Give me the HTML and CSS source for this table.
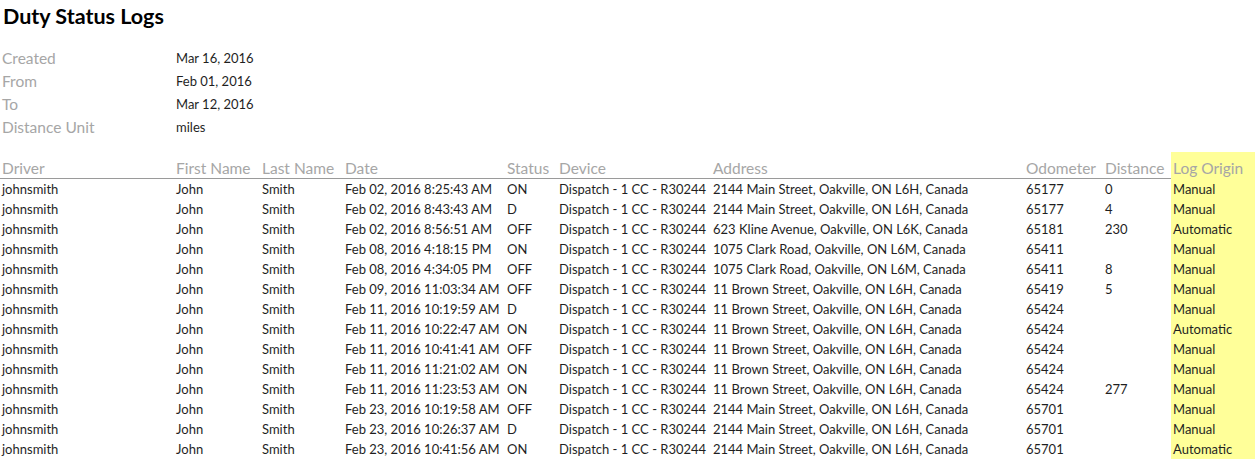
FILE: index.html
```html
<!DOCTYPE html>
<html>
<head>
<meta charset="utf-8">
<link rel="stylesheet" href="styles.css">
</head>
<body>
<div class="page">
  <h1 class="title">Duty Status Logs</h1>
  <div class="meta">
    <div class="meta-row"><span class="meta-label">Created</span><span class="meta-value">Mar 16, 2016</span></div>
    <div class="meta-row"><span class="meta-label">From</span><span class="meta-value">Feb 01, 2016</span></div>
    <div class="meta-row"><span class="meta-label">To</span><span class="meta-value">Mar 12, 2016</span></div>
    <div class="meta-row"><span class="meta-label">Distance Unit</span><span class="meta-value">miles</span></div>
  </div>
  <table class="logs">
    <colgroup>
      <col class="c-driver"><col class="c-first"><col class="c-last"><col class="c-date"><col class="c-status"><col class="c-device"><col class="c-address"><col class="c-odo"><col class="c-dist"><col class="c-origin">
    </colgroup>
    <thead>
      <tr>
        <th>Driver</th><th>First Name</th><th>Last Name</th><th>Date</th><th>Status</th><th>Device</th><th>Address</th><th>Odometer</th><th>Distance</th><th class="origin">Log Origin</th>
      </tr>
    </thead>
    <tbody>
      <tr><td>johnsmith</td><td>John</td><td>Smith</td><td>Feb 02, 2016 8:25:43 AM</td><td>ON</td><td>Dispatch - 1 CC - R30244</td><td>2144 Main Street, Oakville, ON L6H, Canada</td><td>65177</td><td>0</td><td class="origin">Manual</td></tr>
      <tr><td>johnsmith</td><td>John</td><td>Smith</td><td>Feb 02, 2016 8:43:43 AM</td><td>D</td><td>Dispatch - 1 CC - R30244</td><td>2144 Main Street, Oakville, ON L6H, Canada</td><td>65177</td><td>4</td><td class="origin">Manual</td></tr>
      <tr><td>johnsmith</td><td>John</td><td>Smith</td><td>Feb 02, 2016 8:56:51 AM</td><td>OFF</td><td>Dispatch - 1 CC - R30244</td><td>623 Kline Avenue, Oakville, ON L6K, Canada</td><td>65181</td><td>230</td><td class="origin">Automatic</td></tr>
      <tr><td>johnsmith</td><td>John</td><td>Smith</td><td>Feb 08, 2016 4:18:15 PM</td><td>ON</td><td>Dispatch - 1 CC - R30244</td><td>1075 Clark Road, Oakville, ON L6M, Canada</td><td>65411</td><td></td><td class="origin">Manual</td></tr>
      <tr><td>johnsmith</td><td>John</td><td>Smith</td><td>Feb 08, 2016 4:34:05 PM</td><td>OFF</td><td>Dispatch - 1 CC - R30244</td><td>1075 Clark Road, Oakville, ON L6M, Canada</td><td>65411</td><td>8</td><td class="origin">Manual</td></tr>
      <tr><td>johnsmith</td><td>John</td><td>Smith</td><td>Feb 09, 2016 11:03:34 AM</td><td>OFF</td><td>Dispatch - 1 CC - R30244</td><td>11 Brown Street, Oakville, ON L6H, Canada</td><td>65419</td><td>5</td><td class="origin">Manual</td></tr>
      <tr><td>johnsmith</td><td>John</td><td>Smith</td><td>Feb 11, 2016 10:19:59 AM</td><td>D</td><td>Dispatch - 1 CC - R30244</td><td>11 Brown Street, Oakville, ON L6H, Canada</td><td>65424</td><td></td><td class="origin">Manual</td></tr>
      <tr><td>johnsmith</td><td>John</td><td>Smith</td><td>Feb 11, 2016 10:22:47 AM</td><td>ON</td><td>Dispatch - 1 CC - R30244</td><td>11 Brown Street, Oakville, ON L6H, Canada</td><td>65424</td><td></td><td class="origin">Automatic</td></tr>
      <tr><td>johnsmith</td><td>John</td><td>Smith</td><td>Feb 11, 2016 10:41:41 AM</td><td>OFF</td><td>Dispatch - 1 CC - R30244</td><td>11 Brown Street, Oakville, ON L6H, Canada</td><td>65424</td><td></td><td class="origin">Manual</td></tr>
      <tr><td>johnsmith</td><td>John</td><td>Smith</td><td>Feb 11, 2016 11:21:02 AM</td><td>ON</td><td>Dispatch - 1 CC - R30244</td><td>11 Brown Street, Oakville, ON L6H, Canada</td><td>65424</td><td></td><td class="origin">Manual</td></tr>
      <tr><td>johnsmith</td><td>John</td><td>Smith</td><td>Feb 11, 2016 11:23:53 AM</td><td>ON</td><td>Dispatch - 1 CC - R30244</td><td>11 Brown Street, Oakville, ON L6H, Canada</td><td>65424</td><td>277</td><td class="origin">Manual</td></tr>
      <tr><td>johnsmith</td><td>John</td><td>Smith</td><td>Feb 23, 2016 10:19:58 AM</td><td>OFF</td><td>Dispatch - 1 CC - R30244</td><td>2144 Main Street, Oakville, ON L6H, Canada</td><td>65701</td><td></td><td class="origin">Manual</td></tr>
      <tr><td>johnsmith</td><td>John</td><td>Smith</td><td>Feb 23, 2016 10:26:37 AM</td><td>D</td><td>Dispatch - 1 CC - R30244</td><td>2144 Main Street, Oakville, ON L6H, Canada</td><td>65701</td><td></td><td class="origin">Manual</td></tr>
      <tr><td>johnsmith</td><td>John</td><td>Smith</td><td>Feb 23, 2016 10:41:56 AM</td><td>ON</td><td>Dispatch - 1 CC - R30244</td><td>2144 Main Street, Oakville, ON L6H, Canada</td><td>65701</td><td></td><td class="origin">Automatic</td></tr>
    </tbody>
  </table>
</div>
</body>
</html>
```
FILE: styles.css
```css
html, body {
  margin: 0;
  padding: 0;
  background: #ffffff;
}
body {
  font-family: Lato, "Liberation Sans", sans-serif;
  color: #1f1f1f;
  overflow: hidden;
}
.title {
  margin: 0;
  padding-left: 3px;
  height: 33px;
  line-height: 33px;
  font-size: 21.5px;
  font-weight: 700;
  color: #000000;
}
.meta {
  margin-top: 13px;
  display: flex;
  flex-direction: column;
}
.meta-row {
  display: flex;
  align-items: center;
  height: 23px;
}
.meta-label {
  width: 174px;
  padding-left: 2px;
  font-size: 15.5px;
  color: #a6a6a6;
}
.meta-value {
  font-size: 13px;
  color: #1f1f1f;
}
.logs {
  margin-top: 14px;
  border-collapse: collapse;
  table-layout: fixed;
  width: 1255px;
}
.c-driver { width: 175px; }
.c-first { width: 86px; }
.c-last { width: 83px; }
.c-date { width: 162px; }
.c-status { width: 52px; }
.c-device { width: 154px; }
.c-address { width: 313px; }
.c-odo { width: 79px; }
.c-dist { width: 67px; }
.c-origin { width: 84px; }
.logs th {
  height: 25px;
  padding: 0 0 1px 1px;
  text-align: left;
  vertical-align: bottom;
  font-weight: 400;
  font-size: 15.5px;
  line-height: 18px;
  color: #a6a6a6;
  border-bottom: 1px solid #9a9a9a;
  white-space: nowrap;
  overflow: hidden;
}
.logs td {
  height: 20px;
  padding: 0 0 0 1px;
  font-size: 13px;
  line-height: 20px;
  white-space: nowrap;
  overflow: hidden;
  color: #1f1f1f;
}
.logs td:first-child, .logs th:first-child {
  padding-left: 2px;
}
.logs .origin {
  background: #ffff99;
  padding-left: 2px;
}
.logs th.origin {
  border-bottom-color: #ffff99;
}
```
